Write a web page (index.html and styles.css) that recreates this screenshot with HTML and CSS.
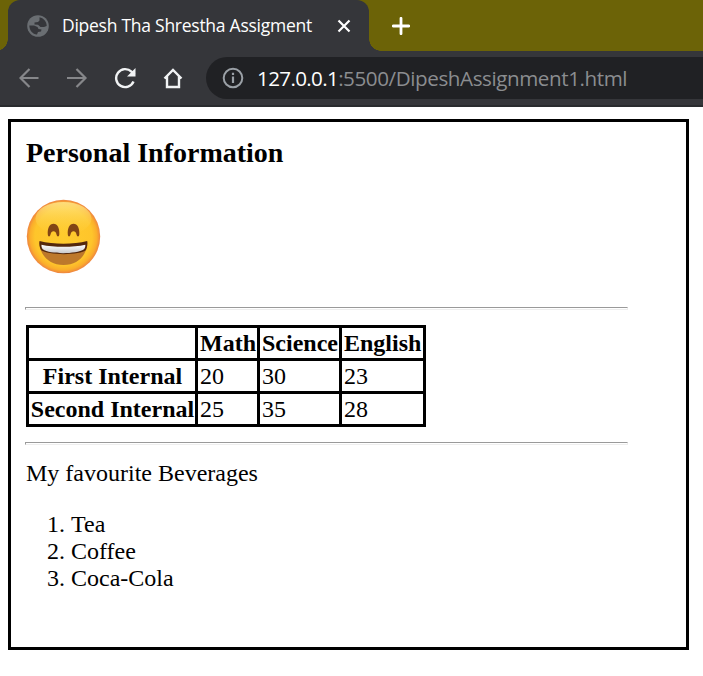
FILE: index.html
```
<!DOCTYPE html>
<html lang="en">
<head>
<meta charset="utf-8">
<title>Dipesh Tha Shrestha Assigment</title>
<link rel="stylesheet" href="styles.css">
</head>
<body>
<header class="browser">
  <div class="tabs">
    <div class="foot foot-left"></div>
    <div class="tab">
      <svg class="globe" width="22" height="22" viewBox="0 0 22 22">
        <circle cx="11" cy="11" r="10.800" fill="#6a6e72"/>
        <path d="M12.500 2.300C16.500 3 19.700 6.500 19.700 11L17 12L13.500 12L11 9.800L7.500 9.500L7.500 7.500L11 7L12.500 5.500ZM2.300 10.500L7 10.500L10.500 12L11.500 14L14.500 14.500L14 16.500L11 17L10 19.600C5.500 19 2.500 15.500 2.300 10.500Z" fill="#35363a"/>
      </svg>
      <span class="tab-title">Dipesh Tha Shrestha Assigment</span>
      <svg class="close" width="14" height="14" viewBox="0 0 14 14"><path d="M1.500 1.500 12.500 12.500M12.500 1.500 1.500 12.500" stroke="#fff" stroke-width="2.200"/></svg>
    </div>
    <div class="foot foot-right"></div>
    <svg class="plus" width="18" height="18" viewBox="0 0 18 18"><path d="M9 1.300V16.700M1.300 9H16.700" stroke="#fff" stroke-width="2.800" stroke-linecap="round"/></svg>
  </div>
  <div class="toolbar">
    <svg class="nav" width="170" height="22" viewBox="0 0 170 22" fill="none">
      <g stroke="#86878a" stroke-width="2.200">
        <path d="M19.500 11H2M10.500 2 1.500 11 10.500 20"/>
        <path d="M48 11H66.500M57.500 2 66.500 11 57.500 20"/>
      </g>
      <path d="M114.500 14.500A9 9 0 1 1 112.500 4.700L115.500 7.500" stroke="#f1f3f4" stroke-width="2.400"/>
      <path d="M116.500 1V9.500H108Z" fill="#f1f3f4"/>
      <path d="M145.500 11.500 154 3 162.500 11.500M148 9.500V20H160V9.500" stroke="#f1f3f4" stroke-width="2.400"/>
    </svg>
    <div class="address">
      <svg width="22" height="22" viewBox="0 0 22 22"><circle cx="11" cy="11" r="9.300" fill="none" stroke="#9aa0a6" stroke-width="2"/><path d="M11 9.500V16M11 5.700V8" stroke="#9aa0a6" stroke-width="2.200"/></svg>
      <span class="url"><span class="host">127.0.0.1</span><span class="path">:5500/DipeshAssignment1.html</span></span>
    </div>
  </div>
</header>
<main class="sheet">
  <h3>Personal Information</h3>
  <svg class="smile" width="76" height="76" viewBox="-.5 -.5 76 76">
    <defs>
      <radialGradient id="face" cx=".5" cy=".5" r=".5">
        <stop offset="0" stop-color="#ffcb2d"/><stop offset=".78" stop-color="#fec52b"/><stop offset=".91" stop-color="#fbae2b"/><stop offset="1" stop-color="#ee8540"/>
      </radialGradient>
      <linearGradient id="shine" x1="0" y1="0" x2="0" y2="1">
        <stop offset="0" stop-color="#ffe992" stop-opacity=".8"/><stop offset="1" stop-color="#ffd542" stop-opacity="0"/>
      </linearGradient>
      <linearGradient id="teeth" x1="0" y1="0" x2="0" y2="1"><stop offset="0" stop-color="#fff"/><stop offset="1" stop-color="#c8c8cb"/></linearGradient>
    </defs>
    <circle cx="38" cy="38" r="36.700" fill="url(#face)"/>
    <ellipse cx="38" cy="20" rx="28" ry="16.500" fill="url(#shine)"/>
    <g fill="#824515">
      <path id="eye" d="M22.300 36C21.800 30 24 25.300 28 25.300C32 25.300 34.300 30 33.800 36C33.600 38.600 31.500 38.600 31 36C30.500 34 29.500 32.800 28 32.800C26.500 32.800 25.500 34 25 36C24.500 38.600 22.500 38.600 22.300 36Z"/>
      <use href="#eye" x="20"/>
    </g>
    <path d="M14 43.500C28 46.500 48 46.500 61.500 43.500C62 56 53 66.500 38 66.500C23 66.500 14 56 14 43.500Z" fill="#bd782b"/>
    <path d="M14 42.500C28 46 48 46 61.700 42.500C62.500 45 61.500 49 60.500 51.500C55 57 22 57 15.500 51.500C14 49 13.500 45.500 14 42.500Z" fill="#54280c"/>
    <path d="M16 46.300C28 49 48 49 59.800 46.300C60 48 59.500 49.800 58.500 50.800C50 56 25 56 17.300 50.800C16.200 49.300 15.800 48 16 46.300Z" fill="url(#teeth)"/>
  </svg>
  <hr>
  <table>
    <colgroup><col class="c-label"><col class="c-math"><col class="c-science"><col class="c-english"></colgroup>
    <tr><th></th><th>Math</th><th>Science</th><th>English</th></tr>
    <tr><th>First Internal</th><td>20</td><td>30</td><td>23</td></tr>
    <tr><th>Second Internal</th><td>25</td><td>35</td><td>28</td></tr>
  </table>
  <hr>
  <p>My favourite Beverages</p>
  <ol><li>Tea</li><li>Coffee</li><li>Coca-Cola</li></ol>
</main>
</body>
</html>
```
FILE: styles.css
```
* { box-sizing: border-box; }
body {
  margin: 0;
  background: #fff;
  color: #000;
  font: 24px/27px "Liberation Serif", serif;
  overflow: hidden;
}
svg { display: block; flex: none; }
.browser { font-family: "Open Sans", sans-serif; }
.tabs { display: flex; height: 51px; background: #6c6307; }
.tab {
  display: flex;
  align-items: center;
  width: 361px;
  height: 51px;
  padding-left: 19px;
  background: #35363a;
  border-radius: 12px 12px 0 0;
}
.tab-title {
  width: 252px;
  margin-left: 13px;
  color: #fff;
  font-size: 17.5px;
  letter-spacing: -.26px;
  white-space: nowrap;
}
.close { margin-left: 23px; }
.foot { align-self: flex-end; height: 12px; }
.foot-left { width: 8px; background: radial-gradient(circle at -4px 0, transparent 11.5px, #35363a 12px); }
.foot-right { width: 12px; background: radial-gradient(circle at 12px 0, transparent 11.5px, #35363a 12px); }
.plus { margin: 17px 0 0 11px; }
.toolbar {
  display: flex;
  height: 56px;
  padding: 6px 0 0 19px;
  background: #35363a;
  border-bottom: 2px solid #292b2e;
}
.nav { margin-top: 10px; }
.address {
  display: flex;
  align-items: center;
  flex: 1;
  height: 42px;
  margin-left: 17px;
  padding-left: 16px;
  background: #202124;
  border-radius: 21px 0 0 21px;
}
.url { margin-left: 13px; font-size: 20.6px; white-space: nowrap; }
.host { color: #fff; letter-spacing: -.64px; }
.path { color: #8b8d90; letter-spacing: -.41px; }
.sheet {
  width: 681px;
  height: 531px;
  margin: 12px 0 0 8px;
  padding: 15px 0 0 15px;
  border: 3px solid #000;
}
h3 { margin: 0; font-size: 28px; line-height: 32px; }
.smile { margin: 29px 0 0 -1px; }
hr { width: 603px; height: 3px; margin: 33px 0 15px -1px; border: 1px solid; border-color: #9a9a9a #eee #eee #9a9a9a; }
table { width: 400px; table-layout: fixed; border-collapse: collapse; }
.c-label { width: 169px; }
.c-math { width: 62px; }
.c-science { width: 82px; }
.c-english { width: 84px; }
th, td { height: 33px; padding: 0 0 0 2px; border: 3px solid #000; line-height: 30px; white-space: nowrap; text-align: left; }
th:first-child { padding: 0 0 0 1px; text-align: center; }
table + hr { margin: 15px 0 15px -1px; }
p { margin: 0; }
ol { margin: 24px 0 0; padding-left: 45px; }
```
